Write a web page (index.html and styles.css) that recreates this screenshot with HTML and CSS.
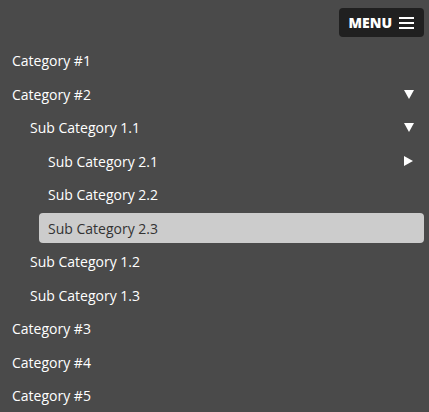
FILE: index.html
```html
<!DOCTYPE html>
<html lang="en">

<head>
    <meta charset="UTF-8">
    <meta name="viewport" content="width=device-width, initial-scale=1.0">
    <title>Menu</title>
    <link rel="stylesheet" href="styles.css">
</head>

<body>

    <div class="topbar">
        <button class="menu-btn">MENU
            <svg width="15" height="12" viewBox="0 0 15 12">
                <rect x="0" y="0" width="15" height="2" fill="#fff"/>
                <rect x="0" y="5" width="15" height="2" fill="#fff"/>
                <rect x="0" y="10" width="15" height="2" fill="#fff"/>
            </svg>
        </button>
    </div>

    <ul class="menu">
        <li><a class="lvl0" href="#">Category #1</a></li>
        <li><a class="lvl0" href="#">Category #2 <span class="arrow down"></span></a></li>
        <li><a class="lvl1" href="#">Sub Category 1.1 <span class="arrow down"></span></a></li>
        <li><a class="lvl2" href="#">Sub Category 2.1 <span class="arrow right"></span></a></li>
        <li><a class="lvl2" href="#">Sub Category 2.2</a></li>
        <li><a class="lvl2 active" href="#">Sub Category 2.3</a></li>
        <li><a class="lvl1" href="#">Sub Category 1.2</a></li>
        <li><a class="lvl1" href="#">Sub Category 1.3</a></li>
        <li><a class="lvl0" href="#">Category #3</a></li>
        <li><a class="lvl0" href="#">Category #4</a></li>
        <li><a class="lvl0" href="#">Category #5</a></li>
    </ul>

</body>

</html>
```

FILE: styles.css
```css
body {
    margin: 0;
    background: #4a4a4a;
    font-family: "Open Sans", Arial, sans-serif;
    font-size: 14px;
    color: #fff;
}

.topbar {
    display: flex;
    justify-content: flex-end;
    padding: 8px 5px 0 0;
}

.menu-btn {
    display: flex;
    align-items: center;
    gap: 7px;
    height: 29px;
    padding: 0 10px;
    background: #202020;
    border: none;
    border-radius: 4px;
    color: #fff;
    font-family: "Open Sans", Arial, sans-serif;
    font-size: 14px;
    font-weight: 800;
}

.menu {
    list-style: none;
    margin: 8.5px 0 0;
    padding: 0;
    display: flex;
    flex-direction: column;
    gap: 3.5px;
}

.menu a {
    display: flex;
    align-items: center;
    justify-content: space-between;
    height: 30px;
    padding: 0 10px 0 9px;
    margin-right: 5px;
    border-radius: 4px;
    color: #fff;
    text-decoration: none;
}

.menu a.lvl0 {
    margin-left: 3px;
}

.menu a.lvl1 {
    margin-left: 21px;
}

.menu a.lvl2 {
    margin-left: 39px;
}

.menu a.active {
    background: #cccccc;
    color: #333;
}

.arrow {
    width: 0;
    height: 0;
}

.arrow.down {
    border-left: 5.5px solid transparent;
    border-right: 5.5px solid transparent;
    border-top: 9px solid #fff;
}

.arrow.right {
    margin-right: 1px;
    border-top: 5px solid transparent;
    border-bottom: 5px solid transparent;
    border-left: 9px solid #fff;
}
```
